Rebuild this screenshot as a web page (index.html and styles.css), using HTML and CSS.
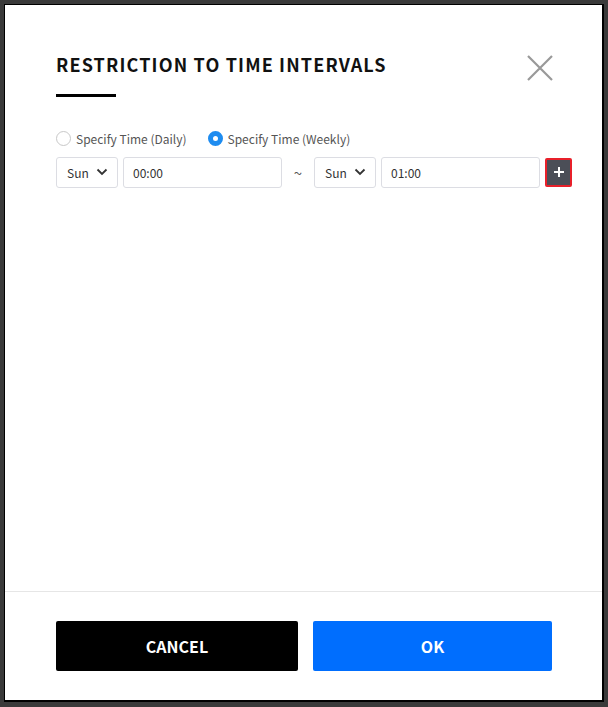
FILE: index.html
```html
<!DOCTYPE html>
<html>
<head>
<meta charset="utf-8">
<link rel="stylesheet" href="styles.css">
</head>
<body>
<div class="dialog">
  <div class="content">
    <div class="header">
      <h1 class="title">RESTRICTION TO TIME INTERVALS</h1>
      <button class="close" aria-label="close">
        <svg width="26" height="26" viewBox="0 0 26 26"><path d="M1 1L25 25M25 1L1 25" stroke="#999" stroke-width="2.2" fill="none"/></svg>
      </button>
    </div>
    <div class="bar"></div>
    <div class="radios">
      <label class="radio"><span class="dot"></span>Specify Time (Daily)</label>
      <label class="radio on"><span class="dot"></span>Specify Time (Weekly)</label>
    </div>
    <div class="row">
      <div class="select">Sun<svg width="12" height="8" viewBox="0 0 12 8"><path d="M1.5 1.5L6 6L10.5 1.5" stroke="#333" stroke-width="1.8" fill="none"/></svg></div>
      <div class="input">00:00</div>
      <span class="tilde">~</span>
      <div class="select">Sun<svg width="12" height="8" viewBox="0 0 12 8"><path d="M1.5 1.5L6 6L10.5 1.5" stroke="#333" stroke-width="1.8" fill="none"/></svg></div>
      <div class="input">01:00</div>
      <button class="add" aria-label="add">
        <svg width="12" height="12" viewBox="0 0 12 12"><path d="M6 1V11M1 6H11" stroke="#fff" stroke-width="2" fill="none"/></svg>
      </button>
    </div>
  </div>
  <div class="footer">
    <button class="btn cancel">CANCEL</button>
    <button class="btn ok">OK</button>
  </div>
</div>
</body>
</html>
```
FILE: styles.css
```css
html, body {
  margin: 0;
  padding: 0;
  background: #3a3a3a;
  height: 707px;
  overflow: hidden;
}
body {
  padding: 4px 0 0 4px;
  box-sizing: border-box;
  font-family: "Noto Sans CJK KR", "Noto Sans", sans-serif;
}
.dialog {
  width: 597px;
  height: 695px;
  background: #fff;
  border: 1px solid #000;
  border-right-width: 2px;
  border-bottom-width: 2px;
  display: flex;
  flex-direction: column;
}
.content {
  flex: 1;
  padding: 0 50px 0 51px;
}
.header {
  display: flex;
  justify-content: space-between;
  align-items: flex-start;
  padding-top: 44px;
  height: 42px;
}
.title {
  margin: 0;
  font-size: 18px;
  font-weight: 700;
  color: #111;
  line-height: 30px;
  letter-spacing: 1.15px;
}
.close {
  border: 0;
  background: none;
  padding: 0;
  margin-top: 6px;
  margin-right: -1px;
  width: 26px;
  height: 26px;
  display: flex;
}
.bar {
  width: 60px;
  height: 3px;
  background: #000;
  margin-top: 3px;
}
.radios {
  display: flex;
  gap: 21px;
  margin-top: 31px;
  height: 20px;
  align-items: center;
}
.radio {
  display: flex;
  align-items: center;
  font-size: 12px;
  color: #555;
  gap: 5px;
}
.dot {
  width: 13px;
  height: 13px;
  border: 1px solid #c8c8c8;
  border-radius: 50%;
  box-sizing: content-box;
}
.radio.on .dot {
  border: 5px solid #1e8cf0;
  width: 5px;
  height: 5px;
  background: #fff;
}
.row {
  display: flex;
  align-items: center;
  margin-top: 8px;
  height: 32px;
  width: 516px;
}
.row > * {
  flex-shrink: 0;
}
.select, .input {
  height: 31px;
  box-sizing: border-box;
  border: 1px solid #dcdde3;
  border-radius: 3px;
  display: flex;
  align-items: center;
  font-size: 12px;
  color: #333;
}
.select {
  width: 62px;
  padding: 0 9px 0 10px;
  justify-content: space-between;
}
.input {
  width: 159px;
  margin-left: 5px;
  padding-left: 9px;
}
.tilde {
  width: 32px;
  text-align: center;
  font-size: 15px;
  color: #555;
}
.add {
  margin-left: 5px;
  width: 27px;
  height: 29px;
  border: 2px solid #e8202a;
  border-radius: 2px;
  background: #4b4e57;
  padding: 0;
  display: flex;
  align-items: center;
  justify-content: center;
  box-sizing: border-box;
}
.footer {
  border-top: 1px solid #e6e6e6;
  padding: 29px 50px 29px 51px;
  display: flex;
  gap: 15px;
}
.btn {
  height: 50px;
  border: 0;
  border-radius: 2px;
  color: #fff;
  font-family: "Noto Sans CJK KR", "Noto Sans", sans-serif;
  font-size: 16px;
  font-weight: 700;
}
.cancel {
  width: 242px;
  background: #000;
}
.ok {
  width: 239px;
  background: #006efe;
}
```
